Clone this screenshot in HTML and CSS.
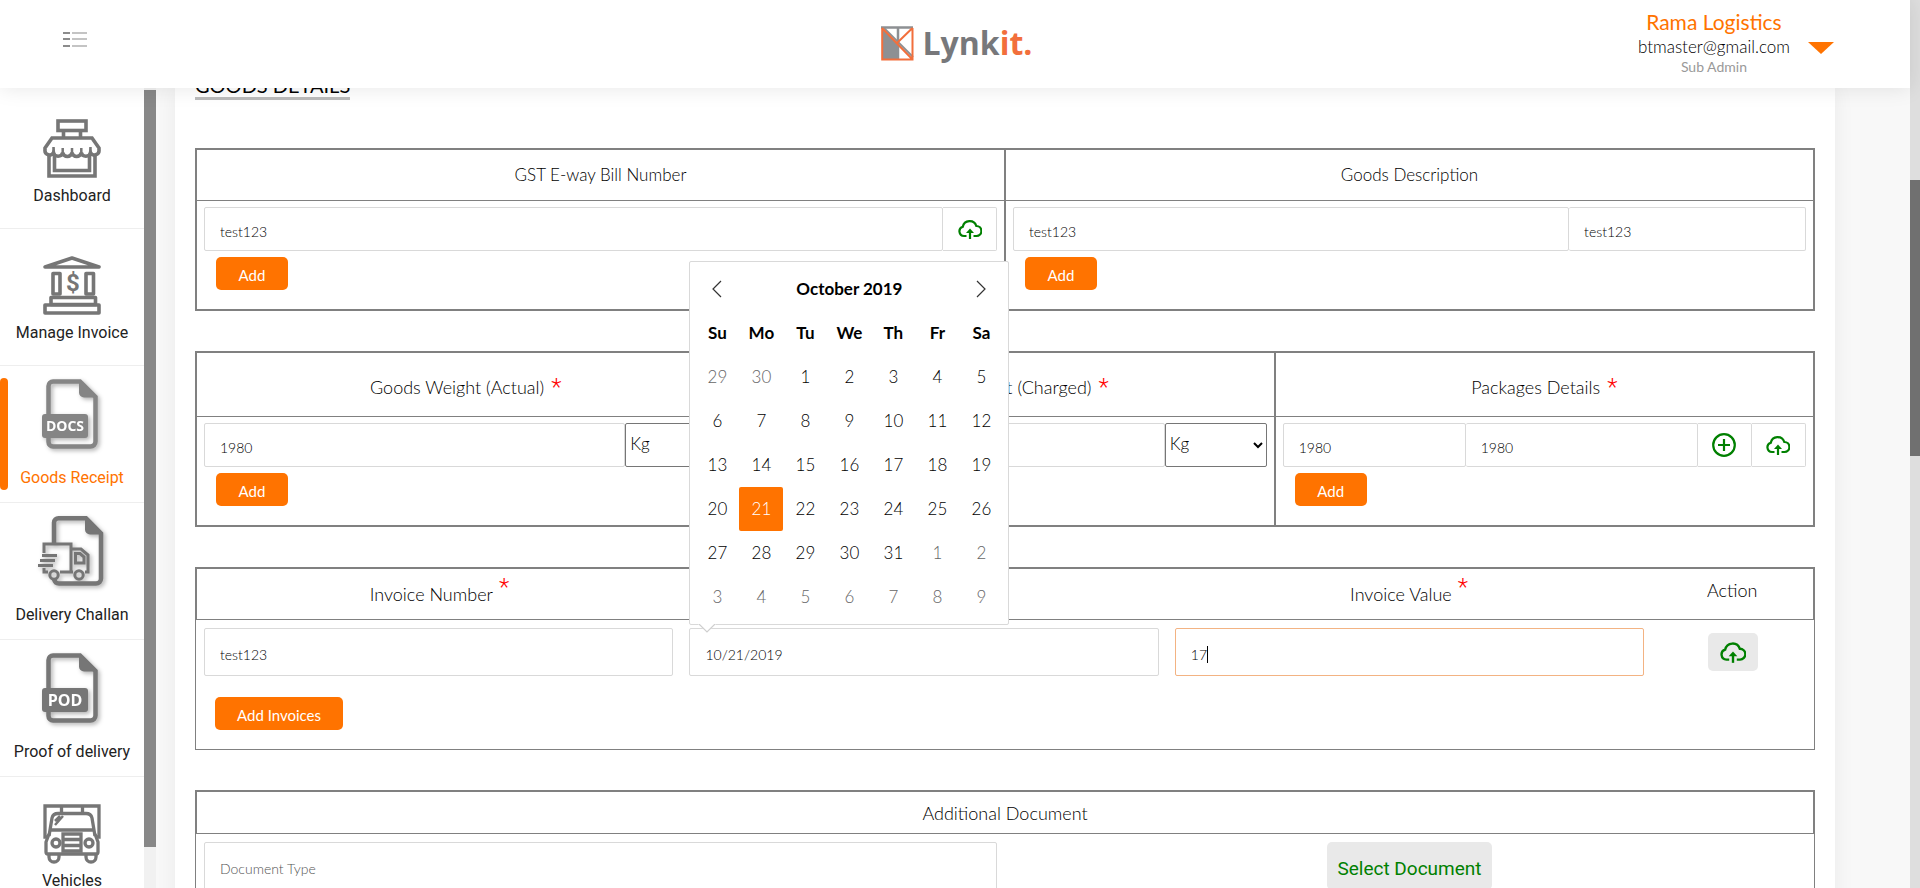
FILE: index.html
```html
<!DOCTYPE html>
<html lang="en">
<head>
<meta charset="utf-8">
<title>Lynkit - Goods Receipt</title>
<link rel="stylesheet" href="styles.css">
</head>
<body>
<svg class="defs" aria-hidden="true">
  <symbol id="cloud" viewBox="0 0 24 20">
    <path d="M8.500 17H6A4.700 4.700 0 0 1 4.800 7.800A7 7 0 0 1 18.300 7A5 5 0 0 1 18.500 17H15.500" fill="none" stroke="currentColor" stroke-width="2.200"/>
    <path d="M12 20V12" stroke="currentColor" stroke-width="2.200" fill="none"/>
    <path d="M8 14L12 9.500L16 14Z" fill="currentColor"/>
  </symbol>
  <symbol id="page" viewBox="0 0 52 70">
    <path d="M7 2.500H34L49.500 18V62.500A5 5 0 0 1 44.500 67.500H7A4.500 4.500 0 0 1 2.500 63V7A4.500 4.500 0 0 1 7 2.500Z" fill="none" stroke="currentColor" stroke-width="4.500"/>
    <path d="M33 1L51 18.500H38A5 5 0 0 1 33 13.500Z" fill="currentColor"/>
  </symbol>
</svg>
<div class="window">
  <div class="app">
    <header class="topbar">
      <button class="menu-toggle" type="button" aria-label="Toggle menu">
        <svg width="24" height="16" viewBox="0 0 24 16"><path d="M0 1H7M0 7H7M0 14H7" stroke="#8c8c8c" stroke-width="2"/><path d="M9 1H24M9 7H24M9 14H24" stroke="#c4c4c4" stroke-width="2"/></svg>
      </button>
      <a class="brand" href="#">
        <svg width="33" height="35" viewBox="0 0 33 35">
          <path d="M1 2L16 17V34H1Z" fill="#8d9093"/>
          <path d="M0 1.500H32M17 2V33" stroke="#8d9093" stroke-width="2.500" fill="none"/>
          <path d="M3 2L32 31" stroke="#8d9093" stroke-width="2"/>
          <path d="M1.200 2V33.500H31.500V2M1 2L31.500 33.500M16 17L31.500 2" fill="none" stroke="#f26f3c" stroke-width="2"/>
        </svg>
        <span class="brand-name">Lynk<span class="brand-accent">it.</span></span>
      </a>
      <div class="account">
        <div class="account-text">
          <span class="account-company">Rama Logistics</span>
          <span class="account-mail">btmaster@gmail.com</span>
          <span class="account-role">Sub Admin</span>
        </div>
        <button class="account-toggle" type="button" aria-label="Account menu">
          <svg width="26" height="12" viewBox="0 0 26 12"><path d="M0 0H26L13 12Z" fill="#ff7300"/></svg>
        </button>
      </div>
    </header>

    <div class="body">
      <nav class="sidebar">
        <div class="nav-list">
          <a class="nav-item" href="#">
            <svg width="58" height="60" viewBox="0 0 58 60" fill="none" stroke="currentColor" stroke-width="3.600">
              <rect x="15" y="2" width="28" height="9.500"/><path d="M20.500 12V18M37.500 12V18"/>
              <path d="M9 19H49L56 29V31A4.500 4.500 0 0 1 47.500 33.500A4.700 4.700 0 0 1 38.300 33.500A4.700 4.700 0 0 1 29 33.500A4.700 4.700 0 0 1 19.700 33.500A4.700 4.700 0 0 1 10.500 33.500A4.500 4.500 0 0 1 2 31V29Z"/>
              <path d="M6 35V57H52V35M11.500 36V51.500H46.500V36"/><path d="M10.500 34V28M19.700 34V29M29 34V29M38.300 34V29M47.500 34V28" stroke-width="2.500"/>
            </svg>
            <span>Dashboard</span>
          </a>
          <a class="nav-item" href="#">
            <svg width="58" height="60" viewBox="0 0 58 60" fill="none" stroke="currentColor" stroke-width="3.600" stroke-linejoin="round">
              <path d="M2 11L29 2L56 11Z"/><rect x="10" y="17.500" width="7" height="20.500"/><rect x="43" y="17.500" width="7.500" height="20.500"/>
              <rect x="8" y="41.500" width="44.500" height="7"/><rect x="2" y="49" width="54" height="8"/>
              <text x="30" y="35" class="icon-dollar" text-anchor="middle">$</text>
            </svg>
            <span>Manage Invoice</span>
          </a>
          <a class="nav-item nav-item-doc nav-item-active" href="#">
            <svg class="icon-shadow" width="60" height="70" viewBox="0 0 60 70">
              <use href="#page" x="4" width="52" height="70"/><rect y="35" width="46" height="24" rx="3" fill="currentColor"/>
              <text x="23" y="52" class="icon-word" text-anchor="middle">DOCS</text>
            </svg>
            <span>Goods Receipt</span>
          </a>
          <a class="nav-item nav-item-doc" href="#">
            <svg class="icon-shadow" width="70" height="70" viewBox="0 0 70 70" fill="none" stroke="currentColor" stroke-width="3">
              <path d="M17 27V6.500A4.500 4.500 0 0 1 21.500 2.200H49L64 17.500V62.500A5 5 0 0 1 59 67.500H22Q18 67.500 17 63" stroke-width="4.500"/>
              <path d="M48 1L66 18.500H53A5 5 0 0 1 48 13.500Z" fill="currentColor" stroke="none"/>
              <path d="M7 37V28H34V56H23M7 52V56H11M35 33H44L51 39V56H48M36 56H23"/>
              <path d="M38.500 37.500H43L47 41V47H38.500Z"/>
              <path d="M5 39.500H20M3 44.500H18M1 49.500H16"/>
              <circle cx="17" cy="59" r="4.200"/><circle cx="42" cy="59" r="4.200"/>
            </svg>
            <span>Delivery Challan</span>
          </a>
          <a class="nav-item nav-item-doc" href="#">
            <svg class="icon-shadow" width="60" height="70" viewBox="0 0 60 70">
              <use href="#page" x="4" width="52" height="70"/><rect y="35" width="46" height="24" rx="3" fill="currentColor"/>
              <text x="23" y="53" class="icon-word icon-word-large" text-anchor="middle">POD</text>
            </svg>
            <span>Proof of delivery</span>
          </a>
          <a class="nav-item" href="#">
            <svg width="58" height="60" viewBox="0 0 58 60" fill="none" stroke="currentColor" stroke-width="3.300">
              <path d="M5 33H2V2H56V33H53M18.500 2V9M39.500 2V9"/>
              <path d="M6 32L9 14Q10 9.500 15 9.500H43Q48 9.500 49 14L52 32M8 26H50"/>
              <path d="M6 30L3 38V48Q3 50 5 50H53Q55 50 55 48V38L52 30"/>
              <circle cx="13" cy="39" r="4"/><circle cx="46" cy="39" r="4"/>
              <path d="M20 30H38V47H20ZM20 35.500H38M20 41.500H38"/>
              <path d="M6 50V53A5 5 0 0 0 16 53V50M43 50V53A5 5 0 0 0 53 53V50"/>
              <path d="M12 17L17 12M12 21L20 12" stroke-width="2.500"/>
            </svg>
            <span>Vehicles</span>
          </a>
        </div>
        <div class="sidebar-scroll"><div class="sidebar-thumb"></div></div>
      </nav>

      <main class="content">
        <section class="sheet">
          <h2 class="sheet-title">GOODS DETAILS</h2>

          <div class="grid-box cols-2">
            <div class="cell">
              <label class="cell-head" for="eway">GST E-way Bill Number</label>
              <div class="cell-body">
                <div class="group">
                  <input class="input" id="eway" type="text" value="test123">
                  <button class="addon" type="button" aria-label="Upload"><svg class="cloud"><use href="#cloud"/></svg></button>
                </div>
                <button class="btn" type="button">Add</button>
              </div>
            </div>
            <div class="cell">
              <label class="cell-head" for="desc">Goods Description</label>
              <div class="cell-body">
                <div class="group">
                  <input class="input input-wide" id="desc" type="text" value="test123">
                  <input class="input" type="text" value="test123" aria-label="Goods code">
                </div>
                <button class="btn" type="button">Add</button>
              </div>
            </div>
          </div>

          <div class="grid-box cols-3">
            <div class="cell">
              <label class="cell-head cell-head-tall" for="actual">Goods Weight (Actual) <span class="required">*</span></label>
              <div class="cell-body">
                <div class="group">
                  <input class="input" id="actual" type="text" value="1980">
                  <select class="unit" aria-label="Actual weight unit"><option>Kg</option></select>
                </div>
                <button class="btn" type="button">Add</button>
              </div>
            </div>
            <div class="cell">
              <label class="cell-head cell-head-tall" for="charged">Goods Weight (Charged) <span class="required">*</span></label>
              <div class="cell-body">
                <div class="group">
                  <input class="input" id="charged" type="text" value="1980">
                  <select class="unit" aria-label="Charged weight unit"><option>Kg</option></select>
                </div>
                <button class="btn" type="button">Add</button>
              </div>
            </div>
            <div class="cell">
              <label class="cell-head cell-head-tall" for="packages">Packages Details <span class="required">*</span></label>
              <div class="cell-body">
                <div class="group">
                  <input class="input input-count" id="packages" type="text" value="1980">
                  <input class="input input-kind" type="text" value="1980" aria-label="Package quantity">
                  <button class="addon" type="button" aria-label="Add package"><svg width="24" height="24" viewBox="0 0 24 24" fill="none" stroke="currentColor" stroke-width="2.200"><circle cx="12" cy="12" r="10.800"/><path d="M6 12H18M12 6V18"/></svg></button>
                  <button class="addon" type="button" aria-label="Upload"><svg class="cloud"><use href="#cloud"/></svg></button>
                </div>
                <button class="btn" type="button">Add</button>
              </div>
            </div>
          </div>

          <div class="list-box">
            <div class="list-head list-cols">
              <label class="list-label" for="inv-no">Invoice Number <span class="required required-raised">*</span></label>
              <label class="list-label" for="inv-date">Invoice Date <span class="required required-raised">*</span></label>
              <label class="list-label" for="inv-value">Invoice Value <span class="required required-raised">*</span></label>
              <span class="list-label list-label-action">Action</span>
            </div>
            <div class="list-body">
              <div class="list-cols">
                <div class="field"><input class="input input-tall" id="inv-no" type="text" value="test123"></div>
                <div class="field">
                  <div class="anchor">
                    <input class="input input-tall" id="inv-date" type="text" value="10/21/2019">
                    <div class="picker">
                      <div class="picker-head">
                        <button class="picker-nav" type="button" aria-label="Previous month"><svg width="10" height="18" viewBox="0 0 10 18"><path d="M9 1L1 9L9 17" fill="none" stroke="#333" stroke-width="1.200"/></svg></button>
                        <span class="picker-title">October 2019</span>
                        <button class="picker-nav" type="button" aria-label="Next month"><svg width="10" height="18" viewBox="0 0 10 18"><path d="M1 1L9 9L1 17" fill="none" stroke="#333" stroke-width="1.200"/></svg></button>
                      </div>
                      <table class="days">
                        <thead><tr><th>Su</th><th>Mo</th><th>Tu</th><th>We</th><th>Th</th><th>Fr</th><th>Sa</th></tr></thead>
                        <tbody>
                          <tr><td class="off">29</td><td class="off">30</td><td>1</td><td>2</td><td>3</td><td>4</td><td>5</td></tr>
                          <tr><td>6</td><td>7</td><td>8</td><td>9</td><td>10</td><td>11</td><td>12</td></tr>
                          <tr><td>13</td><td>14</td><td>15</td><td>16</td><td>17</td><td>18</td><td>19</td></tr>
                          <tr><td>20</td><td class="picked">21</td><td>22</td><td>23</td><td>24</td><td>25</td><td>26</td></tr>
                          <tr><td>27</td><td>28</td><td>29</td><td>30</td><td>31</td><td class="off">1</td><td class="off">2</td></tr>
                          <tr><td class="off">3</td><td class="off">4</td><td class="off">5</td><td class="off">6</td><td class="off">7</td><td class="off">8</td><td class="off">9</td></tr>
                        </tbody>
                      </table>
                      <svg class="picker-tip" width="18" height="9" viewBox="0 0 18 9"><path d="M0 0H18L9 8.500Z" fill="#fff"/><path d="M1 0L9 8L17 0" fill="none" stroke="#cfcfcf" stroke-width="1.200"/></svg>
                    </div>
                  </div>
                </div>
                <div class="field">
                  <div class="anchor">
                    <input class="input input-tall input-focus" id="inv-value" type="text" value="17">
                    <span class="caret"></span>
                  </div>
                </div>
                <div class="field field-action"><button class="upload" type="button" aria-label="Upload invoice"><svg class="cloud cloud-large"><use href="#cloud"/></svg></button></div>
              </div>
              <button class="btn btn-invoices" type="button">Add Invoices</button>
            </div>
          </div>

          <div class="list-box">
            <div class="list-head list-head-short">Additional Document</div>
            <div class="list-body document-cols">
              <div class="field"><input class="input input-tall" type="text" placeholder="Document Type" aria-label="Document Type"></div>
              <div class="field field-center"><button class="select-document" type="button">Select Document</button></div>
            </div>
          </div>
        </section>
      </main>
    </div>
  </div>
  <div class="window-scroll"><div class="window-thumb"></div></div>
</div>
</body>
</html>
```

FILE: styles.css
```css
* { box-sizing: border-box; }

body {
  margin: 0;
  font-family: "Century Gothic", Lato, sans-serif;
  font-size: 17px;
  font-weight: 300;
  line-height: 24px;
  color: #000;
  background: #f8f8f8;
}

button, input, select { font-family: inherit; font-weight: inherit; color: inherit; margin: 0; }
button { cursor: pointer; border: 0; padding: 0; background: none; }
a { color: inherit; text-decoration: none; }
svg { display: block; }
.defs { position: absolute; width: 0; height: 0; }

.window { display: flex; height: 100vh; overflow: hidden; }
.app { flex: 1; min-width: 0; display: flex; flex-direction: column; }

.window-scroll { width: 10px; background: #dedede; padding-top: 180px; }
.window-thumb { height: 276px; background: #707070; }

/* Top bar */
.topbar {
  position: relative;
  z-index: 5;
  flex: none;
  display: grid;
  grid-template-columns: 1fr auto 1fr;
  align-items: center;
  height: 88px;
  padding: 0 76px 4px 63px;
  background: #fff;
  box-shadow: 0 0 20px rgba(0, 0, 0, 0.1);
}
.menu-toggle { justify-self: start; margin-bottom: 4px; }
.brand { display: flex; align-items: center; gap: 9px; padding: 2px 0 0 16px; }
.brand-name {
  font-family: "Open Sans", sans-serif;
  font-size: 32px;
  line-height: 40px;
  font-weight: 700;
  color: #77787b;
}
.brand-accent { color: #f26f3c; }
.account { justify-self: end; display: flex; align-items: center; gap: 18px; }
.account-text { display: flex; flex-direction: column; align-items: center; }
.account-company { font-size: 21px; line-height: 26px; font-weight: 400; color: #ff7300; }
.account-mail { font-size: 17px; }
.account-role { font-size: 14px; line-height: 16px; font-weight: 400; color: #999; }
.account-toggle { margin-top: 12px; }

.body { flex: 1; min-height: 0; display: flex; }

/* Sidebar */
.sidebar { flex: none; display: flex; width: 156px; background: #fff; overflow: hidden; }
.nav-list { flex: 1; padding-top: 4px; }
.nav-item {
  position: relative;
  display: flex;
  flex-direction: column;
  align-items: center;
  gap: 5px;
  height: 137px;
  padding-top: 27px;
  border-bottom: 1px solid #eee;
  font-family: Roboto, sans-serif;
  font-size: 16px;
  font-weight: 400;
  line-height: 24px;
  white-space: nowrap;
  color: #222;
}
.nav-item svg { color: #767676; flex: none; }
.nav-item-doc { padding-top: 13px; gap: 17px; }
.nav-item-active { color: #ff7300; }
.nav-item-active svg { color: #858585; }
.nav-item-active::before {
  content: "";
  position: absolute;
  left: 0;
  top: 12px;
  width: 8px;
  height: 112px;
  border-radius: 4px;
  background: #ff7300;
}
.icon-shadow { overflow: visible; filter: drop-shadow(2px 2px 2px rgba(0, 0, 0, 0.3)); }
.icon-word { font: 700 14px "Open Sans", sans-serif; fill: #fff; stroke: none; }
.icon-word-large { font-size: 16px; }
.icon-dollar { font: 700 24px Roboto, sans-serif; fill: currentColor; stroke: none; }
.sidebar-scroll { width: 12px; padding-top: 2px; background: #f1f1f1; }
.sidebar-thumb { height: 757px; background: #888; }

/* Form sheet */
.content { flex: 1; min-width: 0; overflow: hidden; padding: 0 75px 0 19px; }
.sheet {
  display: flow-root;
  min-height: 100%;
  padding: 0 20px;
  background: #fff;
  box-shadow: 0 0 20px rgba(0, 0, 0, 0.06);
}
.sheet-title {
  width: max-content;
  margin: -14px 0 48px;
  border-bottom: 3px solid #bbb;
  font-size: 20px;
  line-height: 23px;
  font-weight: 400;
}

.grid-box { display: grid; gap: 2px; padding: 2px; margin-bottom: 40px; background: #808080; }
.cols-2 { grid-template-columns: 1fr 1fr; }
.cols-3 { grid-template-columns: 1fr 1fr 1fr; }
.cell { min-width: 0; background: #fff; }
.cell-head {
  display: flex;
  align-items: center;
  justify-content: center;
  gap: 7px;
  height: 51px;
  border-bottom: 1px solid #808080;
}
.cell-head-tall { height: 64px; padding-top: 5px; font-size: 18px; }
.cell-body { padding: 6px 7px 19px; }
.group { display: flex; margin-bottom: 6px; }

.required { color: #f00; font-family: Roboto, sans-serif; font-size: 24px; }
.required-raised { margin-bottom: 14px; }

.input {
  flex: 11;
  min-width: 0;
  width: 100%;
  height: 44px;
  padding: 5px 15px 0;
  border: 1px solid #d9d9d9;
  border-radius: 2px;
  background: #fff;
  font-size: 14px;
  outline: 0;
}
.input::placeholder { color: #555; opacity: 1; }
.input-wide { flex: 28; }
.input-count { flex: 3; }
.input-kind { flex: 4; }
.input + .input { border-left: 0; }
.input-tall { display: block; height: 48px; }
.input-focus { border-color: #f3b383; }
.unit {
  width: 102px;
  height: 44px;
  padding: 0 0 4px;
  border: 1px solid #767676;
  border-radius: 2px;
  background: #fff;
  font-size: 17px;
}
.addon {
  display: grid;
  place-items: center;
  width: 54px;
  height: 44px;
  border: 1px solid #d9d9d9;
  border-left: 0;
  border-radius: 0 2px 2px 0;
  color: #008000;
}
.cloud { width: 24px; height: 20px; }
.cloud-large { width: 26px; height: 22px; }

.btn {
  display: block;
  height: 33px;
  min-width: 72px;
  margin-left: 12px;
  padding: 2px 22px 0;
  border-radius: 5px;
  background: #ff7300;
  color: #fff;
  font-size: 15px;
  font-weight: 400;
}

/* Invoice and document lists */
.list-box { margin-bottom: 40px; }
.list-head {
  height: 53px;
  border: 2px solid #808080;
  border-bottom-width: 1px;
  font-size: 18px;
}
.list-head-short {
  display: flex;
  align-items: center;
  justify-content: center;
  height: 44px;
}
.list-cols { display: grid; grid-template-columns: 3fr 3fr 3fr 1fr; }
.list-label { display: flex; align-items: center; justify-content: center; gap: 6px; }
.list-label-action { padding-bottom: 8px; }
.list-body { border: 1px solid #808080; border-top: 0; padding: 8px 0 19px; }
.field { padding: 0 8px; }
.field-action { display: flex; align-items: center; justify-content: center; }
.field-center { display: flex; justify-content: center; }
.anchor { position: relative; }
.upload {
  display: grid;
  place-items: center;
  width: 50px;
  height: 38px;
  border-radius: 5px;
  background: #e9e9e9;
  color: #008000;
}
.btn-invoices { margin: 21px 0 0 19px; }
.document-cols { display: grid; grid-template-columns: 1fr 1fr; }
.select-document {
  height: 48px;
  padding: 4px 10px 0;
  border-radius: 5px;
  background: #e9e9e9;
  color: #008000;
  font-family: "Liberation Sans Narrow", Roboto, sans-serif;
  font-size: 19px;
  font-weight: 400;
}
.caret { position: absolute; left: 32px; top: 18px; width: 1px; height: 17px; background: #000; }

/* Date picker */
.picker {
  position: absolute;
  z-index: 3;
  left: 0;
  bottom: calc(100% + 3px);
  padding: 5px;
  border: 1px solid #d9d9d9;
  border-radius: 2px;
  background: #fff;
}
.picker-head { display: flex; align-items: center; height: 44px; }
.picker-nav { display: grid; place-items: center; width: 44px; height: 44px; }
.picker-title { flex: 1; text-align: center; font-weight: 700; }
.days { border-collapse: collapse; }
.days th, .days td { width: 44px; height: 44px; padding: 0; text-align: center; font-weight: inherit; }
.days th { font-weight: 700; }
.days .off { color: #666; }
.days .picked { border-radius: 2px; background: #ff7300; color: #fff; }
.picker-tip { position: absolute; left: 8px; top: 100%; }
```
